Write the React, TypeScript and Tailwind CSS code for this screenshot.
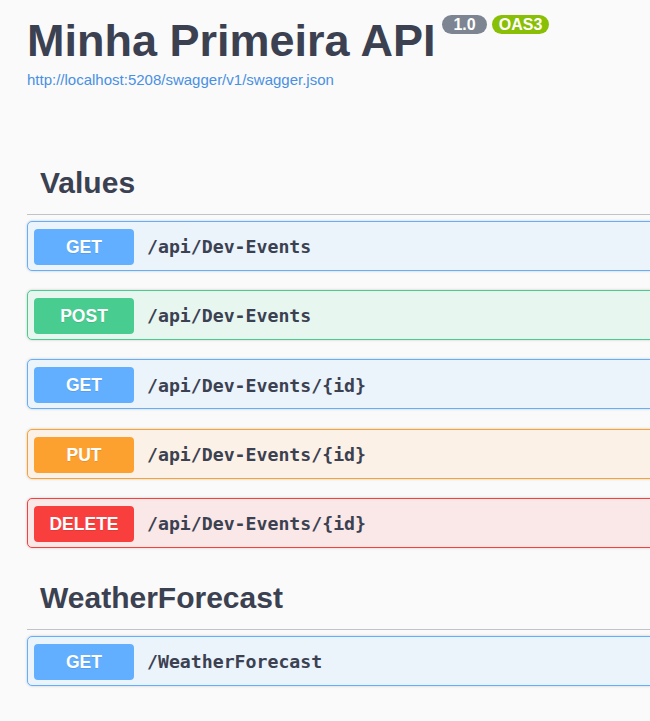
import React from "react";

type Op = { method: string; path: string; badge: string; border: string; bg: string };

const values: Op[] = [
  { method: "GET", path: "/api/Dev-Events", badge: "bg-[#61affe]", border: "border-[#61affe]", bg: "bg-[#ebf3fb]" },
  { method: "POST", path: "/api/Dev-Events", badge: "bg-[#49cc90]", border: "border-[#49cc90]", bg: "bg-[#e8f6f0]" },
  { method: "GET", path: "/api/Dev-Events/{id}", badge: "bg-[#61affe]", border: "border-[#61affe]", bg: "bg-[#ebf3fb]" },
  { method: "PUT", path: "/api/Dev-Events/{id}", badge: "bg-[#fca130]", border: "border-[#fca130]", bg: "bg-[#fbf1e6]" },
  { method: "DELETE", path: "/api/Dev-Events/{id}", badge: "bg-[#f93e3e]", border: "border-[#f93e3e]", bg: "bg-[#fae7e7]" },
];

const weather: Op[] = [
  { method: "GET", path: "/WeatherForecast", badge: "bg-[#61affe]", border: "border-[#61affe]", bg: "bg-[#ebf3fb]" },
];

function OpBlock({ op }: { op: Op }) {
  return (
    <div
      className={`mb-[19.25px] flex h-[50px] items-start rounded-[5px] border ${op.border} ${op.bg} pl-[6px] pt-[7px] shadow-[0_0_3px_rgba(0,0,0,0.19)]`}
    >
      <div
        className={`flex h-[36px] w-[100px] shrink-0 items-center justify-center rounded-[4px] ${op.badge} text-[17.5px] font-bold text-white [text-shadow:0_1px_0_rgba(0,0,0,0.1)]`}
        style={{ fontFamily: '"Liberation Sans", Arial, sans-serif' }}
      >
        {op.method}
      </div>
      <div
        className="flex h-[36px] items-center pl-[13px] text-[18.2px] font-semibold text-[#3b4151]"
        style={{ fontFamily: '"DejaVu Sans Mono", "Liberation Mono", monospace' }}
      >
        {op.path}
      </div>
    </div>
  );
}

function Tag({ name, ops }: { name: string; ops: Op[] }) {
  return (
    <section>
      <div className="mb-[6px] border-b border-[#c1c3c7] pb-[13.4px] pl-[13px] pt-[12.5px]">
        <h3 className="text-[30px] font-bold leading-[36px] text-[#3b4151]">{name}</h3>
      </div>
      {ops.map((op, i) => (
        <OpBlock key={i} op={op} />
      ))}
    </section>
  );
}

export default function App() {
  return (
    <div
      className="min-h-screen w-full overflow-hidden bg-[#fafafa]"
      style={{ fontFamily: '"Liberation Sans", Arial, sans-serif' }}
    >
      <div className="w-[900px] pl-[27px] pt-[16px]">
        <div className="flex items-start">
          <h1 className="text-[45px] font-bold leading-[50px] text-[#3b4151]">Minha Primeira API</h1>
          <span className="ml-[7px] mt-[-1px] flex h-[19px] items-center rounded-full bg-[#7d8492] px-[11px] text-[16px] font-bold text-white">
            1.0
          </span>
          <span className="ml-[5px] mt-[-1px] flex h-[19px] items-center rounded-full bg-[#89bf04] px-[7px] text-[16px] font-bold text-white">
            OAS3
          </span>
        </div>
        <a href="#" className="mt-[5px] block text-[15px] leading-[18px] text-[#4990e2]">
          http://localhost:5208/swagger/v1/swagger.json
        </a>
        <div className="mt-[63px]">
          <Tag name="Values" ops={values} />
          <Tag name="WeatherForecast" ops={weather} />
        </div>
      </div>
    </div>
  );
}
